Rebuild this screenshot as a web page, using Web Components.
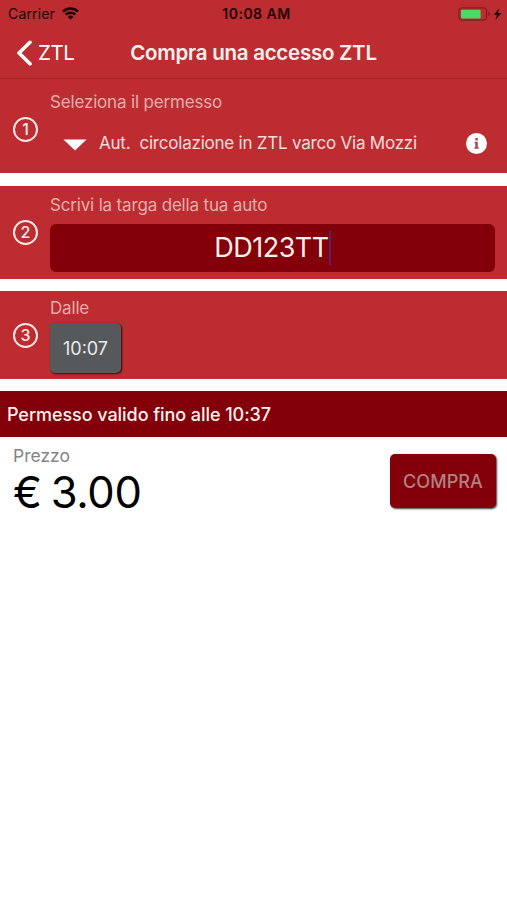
<!DOCTYPE html>
<html lang="it">
<head>
<meta charset="UTF-8">
<meta name="viewport" content="width=device-width, initial-scale=1">
<title>Compra una accesso ZTL</title>
<style>
  body {
    --red: #bc2c31;
    --dark-red: #83000a;
    margin: 0;
    min-height: 100vh;
    background: #fff;
    color: #fff;
    font-family: Inter, "Liberation Sans", sans-serif;
  }
</style>
</head>
<body>
<ztl-app></ztl-app>

<script>
// iOS status bar
class StatusBar extends HTMLElement {
  constructor() {
    super();
    this.attachShadow({ mode: 'open' });
  }

  connectedCallback() {
    this.shadowRoot.innerHTML = `
      <style>
        :host {
          display: grid;
          grid-template-columns: 1fr auto 1fr;
          align-items: center;
          height: 27px;
          padding: 0 5px 0 8px;
          background: var(--red);
          color: #1c0405;
          font-size: 14px;
        }
        .left, .right {
          display: flex;
          align-items: center;
        }
        .left {
          gap: 7px;
          letter-spacing: 0.15px;
        }
        .right { justify-content: flex-end; }
        .time {
          font-weight: 600;
          letter-spacing: 0.5px;
          padding-left: 3px;
        }
        svg { display: block; }
      </style>
      <div class="left">
        <span>Carrier</span>
        <svg width="17" height="13" viewBox="0 0 17 13" fill="none" stroke="#1c0405" stroke-width="2.5">
          <path d="M1 4.600a10.600 10.600 0 0 1 15 0"/>
          <path d="M3.700 7.700a6.800 6.800 0 0 1 9.600 0"/>
          <path d="M8.500 12.600 5.700 9.900a4 4 0 0 1 5.600 0z" fill="#1c0405" stroke="none"/>
        </svg>
      </div>
      <span class="time">${this.getAttribute('time')}</span>
      <div class="right">
        <svg width="44" height="14" viewBox="0 0 44 14">
          <rect x="1" y=".9" width="27.600" height="12.200" rx="2.600" fill="none" stroke="#761a1e"/>
          <rect x="3" y="2.800" width="19.600" height="8.600" rx="1" fill="#4cd964"/>
          <path d="M30.300 5v4c1-.3 1.500-1.100 1.500-2s-.5-1.700-1.500-2z" fill="#761a1e"/>
          <path d="M41.300 1.300 35.700 7.800h3.300l-1.500 5 5.700-6.800h-3.400z" fill="#1c0405"/>
        </svg>
      </div>
    `;
  }
}

// Navigation bar with back link and centred title
class NavBar extends HTMLElement {
  constructor() {
    super();
    this.attachShadow({ mode: 'open' });
  }

  connectedCallback() {
    this.shadowRoot.innerHTML = `
      <style>
        :host {
          display: grid;
          grid-template-columns: 1fr auto 1fr;
          align-items: center;
          height: 52px;
          box-sizing: border-box;
          padding: 0 16px;
          background: var(--red);
          border-bottom: 1px solid #ab272c;
        }
        .back {
          display: flex;
          align-items: center;
          gap: 6px;
          font-size: 20.500px;
          letter-spacing: -0.5px;
        }
        .title {
          margin: 0;
          color: #fff0ee;
          font-size: 20.500px;
          font-weight: 600;
          letter-spacing: -0.26px;
          white-space: nowrap;
        }
      </style>
      <div class="back">
        <svg width="16" height="26" viewBox="0 0 16 26" fill="none" stroke="#fff" stroke-width="3.600" stroke-linecap="round" stroke-linejoin="round">
          <path d="M14 2.300 3 13l11 10.700"/>
        </svg>
        <span><slot name="back"></slot></span>
      </div>
      <h1 class="title"><slot></slot></h1>
    `;
  }
}

// Numbered step: badge on the left, label and control on the right
class StepPanel extends HTMLElement {
  constructor() {
    super();
    this.attachShadow({ mode: 'open' });
  }

  connectedCallback() {
    this.shadowRoot.innerHTML = `
      <style>
        :host {
          display: flex;
          align-items: center;
          box-sizing: border-box;
          padding: 0 12px;
          background: var(--red);
        }
        .badge {
          flex: none;
          display: flex;
          align-items: center;
          justify-content: center;
          box-sizing: border-box;
          width: 25px;
          height: 25px;
          margin: var(--badge-top, 0) 12px 0 1px;
          border: 2px solid #fbe9e7;
          border-radius: 50%;
          color: #fbe9e7;
          font-size: 16px;
          font-weight: 500;
        }
        .content {
          flex: 1;
          align-self: stretch;
        }
        .label {
          padding-top: var(--label-top, 8px);
          color: #e6adaa;
          font-size: 17px;
          letter-spacing: -0.17px;
          line-height: 22px;
        }
      </style>
      <div class="badge">${this.getAttribute('step')}</div>
      <div class="content">
        <div class="label">${this.getAttribute('label')}</div>
        <slot></slot>
      </div>
    `;
  }
}

class PermitSelect extends HTMLElement {
  constructor() {
    super();
    this.attachShadow({ mode: 'open' });
  }

  connectedCallback() {
    this.shadowRoot.innerHTML = `
      <style>
        :host {
          display: flex;
          align-items: center;
          height: 60px;
          padding: 0 8px 0 13px;
        }
        .value {
          flex: 1;
          margin-left: 11px;
          color: #fcdcda;
          font-size: 17px;
          letter-spacing: -0.22px;
          white-space: pre;
        }
        .arrow { margin-top: 4px; }
      </style>
      <svg class="arrow" width="25" height="12" viewBox="0 0 25 12"><path d="M.5.5h23L12 11.500z" fill="#fff"/></svg>
      <span class="value">${this.getAttribute('value')}</span>
      <svg width="21" height="21" viewBox="0 0 21 21">
        <circle cx="10.500" cy="10.500" r="10.500" fill="#fff"/>
        <path d="M9.300 5h2.500v2.400H9.300zM8.500 8.700h3.300v5.500h.9v1.500H8.400v-1.500h.9v-4h-.8z" fill="#a84a4d"/>
      </svg>
    `;
  }
}

class PlateInput extends HTMLElement {
  constructor() {
    super();
    this.attachShadow({ mode: 'open' });
  }

  connectedCallback() {
    this.shadowRoot.innerHTML = `
      <style>
        :host {
          display: flex;
          align-items: center;
          justify-content: center;
          height: 48px;
          margin-top: 8px;
          border-radius: 6px;
          background: var(--dark-red);
          color: #fff0ee;
          font-size: 27px;
          letter-spacing: -0.5px;
        }
        .caret {
          width: 2px;
          height: 34px;
          background: #5b2268;
        }
      </style>
      <span>${this.getAttribute('value')}</span>
      <span class="caret"></span>
    `;
  }
}

class RaisedButton extends HTMLElement {
  constructor() {
    super();
    this.attachShadow({ mode: 'open' });
  }

  connectedCallback() {
    this.shadowRoot.innerHTML = `
      <style>
        :host { display: block; }
        button {
          display: block;
          width: 100%;
          height: 100%;
          padding: 0;
          border: 0;
          border-radius: 5px;
          background: var(--button-bg);
          color: var(--button-color);
          font: inherit;
          letter-spacing: inherit;
          box-shadow: 1px 1px 2px rgba(0, 0, 0, 0.75);
        }
      </style>
      <button><slot></slot></button>
    `;
  }
}

class ZtlApp extends HTMLElement {
  constructor() {
    super();
    this.attachShadow({ mode: 'open' });
  }

  connectedCallback() {
    this.shadowRoot.innerHTML = `
      <style>
        :host { display: block; }
        .steps {
          display: flex;
          flex-direction: column;
          gap: 12.500px;
        }
        .permit {
          height: 94px;
          --label-top: 12px;
          --badge-top: 6px;
        }
        .plate { height: 93px; }
        .start {
          height: 88px;
          --label-top: 6px;
        }
        .time {
          width: 71px;
          height: 50px;
          margin-top: 4px;
          font-size: 18px;
          --button-bg: #56595c;
          --button-color: #e9eaea;
        }
        .validity {
          display: flex;
          align-items: center;
          height: 46px;
          margin-top: 12px;
          padding-left: 7px;
          background: var(--dark-red);
          color: #fff0ee;
          font-size: 18px;
          font-weight: 500;
          letter-spacing: -0.06px;
        }
        .checkout {
          display: flex;
          justify-content: space-between;
          align-items: flex-start;
          padding: 7px 11px 0 13px;
        }
        .price-label {
          color: #858585;
          font-size: 17.500px;
          line-height: 23px;
        }
        .price {
          color: #000;
          font-size: 43.500px;
          letter-spacing: -0.3px;
          word-spacing: -3px;
          line-height: 51px;
        }
        .buy {
          width: 106px;
          height: 54px;
          margin-top: 10px;
          font-size: 18px;
          font-weight: 500;
          letter-spacing: 0.1px;
          --button-bg: var(--dark-red);
          --button-color: #b28184;
        }
      </style>
      <status-bar time="10:08 AM"></status-bar>
      <nav-bar><span slot="back">ZTL</span>Compra una accesso ZTL</nav-bar>
      <div class="steps">
        <step-panel class="permit" step="1" label="Seleziona il permesso">
          <permit-select value="Aut.  circolazione in ZTL varco Via Mozzi"></permit-select>
        </step-panel>
        <step-panel class="plate" step="2" label="Scrivi la targa della tua auto">
          <plate-input value="DD123TT"></plate-input>
        </step-panel>
        <step-panel class="start" step="3" label="Dalle">
          <raised-button class="time">10:07</raised-button>
        </step-panel>
      </div>
      <div class="validity">Permesso valido fino alle 10:37</div>
      <div class="checkout">
        <div>
          <div class="price-label">Prezzo</div>
          <div class="price">€ 3.00</div>
        </div>
        <raised-button class="buy">COMPRA</raised-button>
      </div>
    `;
  }
}

customElements.define('status-bar', StatusBar);
customElements.define('nav-bar', NavBar);
customElements.define('step-panel', StepPanel);
customElements.define('permit-select', PermitSelect);
customElements.define('plate-input', PlateInput);
customElements.define('raised-button', RaisedButton);
customElements.define('ztl-app', ZtlApp);
</script>
</body>
</html>
